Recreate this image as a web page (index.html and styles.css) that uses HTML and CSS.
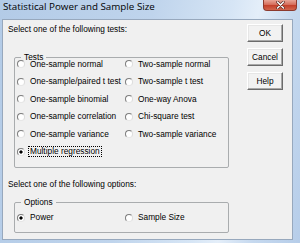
FILE: index.html
```html
<!DOCTYPE html>
<html>
<head>
<meta charset="utf-8">
<link rel="stylesheet" href="styles.css">
</head>
<body>
<div class="window">
  <div class="titlebar">
    <span class="title">Statistical Power and Sample Size</span>
    <span class="close">
      <svg width="9" height="8" viewBox="0 0 9 8">
        <path d="M1.5 1 L7.5 7 M7.5 1 L1.5 7" stroke="#5a2a24" stroke-width="2.6" stroke-linecap="round"/>
        <path d="M1.5 1 L7.5 7 M7.5 1 L1.5 7" stroke="#ffffff" stroke-width="1.4" stroke-linecap="round"/>
      </svg>
    </span>
  </div>
  <div class="client">
    <div class="main">
      <p class="prompt">Select one of the following tests:</p>
      <fieldset class="group tests">
        <legend>Tests</legend>
        <div class="grid">
          <label class="radio"><span class="dot"></span><span class="lbl">One-sample normal</span></label>
          <label class="radio"><span class="dot"></span><span class="lbl">Two-sample normal</span></label>
          <label class="radio"><span class="dot"></span><span class="lbl">One-sample/paired t test</span></label>
          <label class="radio"><span class="dot"></span><span class="lbl">Two-sample t test</span></label>
          <label class="radio"><span class="dot"></span><span class="lbl">One-sample binomial</span></label>
          <label class="radio"><span class="dot"></span><span class="lbl">One-way Anova</span></label>
          <label class="radio"><span class="dot"></span><span class="lbl">One-sample correlation</span></label>
          <label class="radio"><span class="dot"></span><span class="lbl">Chi-square test</span></label>
          <label class="radio"><span class="dot"></span><span class="lbl">One-sample variance</span></label>
          <label class="radio"><span class="dot"></span><span class="lbl">Two-sample variance</span></label>
          <label class="radio"><span class="dot checked"></span><span class="lbl focus">Multiple regression</span></label>
        </div>
      </fieldset>
      <p class="prompt prompt-options">Select one of the following options:</p>
      <fieldset class="group options">
        <legend>Options</legend>
        <div class="grid">
          <label class="radio"><span class="dot checked"></span><span class="lbl">Power</span></label>
          <label class="radio"><span class="dot"></span><span class="lbl">Sample Size</span></label>
        </div>
      </fieldset>
    </div>
    <div class="buttons">
      <button class="btn">OK</button>
      <button class="btn">Cancel</button>
      <button class="btn">Help</button>
    </div>
  </div>
</div>
</body>
</html>
```

FILE: styles.css
```css
html, body {
  margin: 0;
  padding: 0;
}
body {
  width: 300px;
  height: 243px;
  overflow: hidden;
  font-family: "Liberation Sans", Arial, sans-serif;
  font-size: 8.3px;
  color: #000;
}
.window {
  width: 300px;
  height: 243px;
  display: flex;
  flex-direction: column;
  background: linear-gradient(100deg, #b3cbe7 0%, #bfd4ec 45%, #d6e5f5 68%, #e4eef9 76%, #c6d9ef 86%, #b6cde9 100%);
}
.titlebar {
  height: 19px;
  display: flex;
  justify-content: space-between;
  align-items: flex-start;
}
.title {
  font-family: "Open Sans", "Liberation Sans", sans-serif;
  font-size: 9.8px;
  line-height: 14px;
  padding: 0 0 0 3px;
  color: #000;
  white-space: nowrap;
}
.close {
  width: 34px;
  height: 11px;
  margin-right: 3px;
  box-sizing: border-box;
  border: 1px solid #8c3a2e;
  border-top: none;
  border-radius: 0 0 4px 4px;
  background: linear-gradient(#e8a597 0%, #d66f5d 45%, #c4412c 55%, #d2664e 100%);
  display: flex;
  align-items: center;
  justify-content: center;
}
.close svg {
  display: block;
}
.client {
  margin: 0 7px 3px 2px;
  height: 221px;
  box-sizing: border-box;
  border: 1px solid #97a8bd;
  background: #f0f0f0;
  display: flex;
}
.main {
  width: 226px;
  box-sizing: border-box;
  padding: 4px 0 0 5px;
}
.prompt {
  margin: 0;
  line-height: 11px;
  white-space: nowrap;
}
.prompt-options {
  margin-top: 11.5px;
}
.group {
  width: 215px;
  box-sizing: border-box;
  margin: 0 0 0 6px;
  border: 1px solid #a9acae;
  border-radius: 2px;
  padding: 0 0 0 2px;
  min-inline-size: 0;
}
.group legend {
  line-height: 7px;
  padding: 0 3px;
  margin-left: 4px;
}
.tests {
  margin-top: 18.5px;
  padding-top: 0;
  padding-bottom: 11.5px;
}
.options {
  margin-top: 9px;
  padding-top: 8px;
  padding-bottom: 10.5px;
}
.grid {
  display: grid;
  grid-template-columns: 108px 1fr;
  grid-auto-rows: 7px;
  row-gap: 10.6px;
}
.radio {
  display: flex;
  align-items: center;
  white-space: nowrap;
}
.dot {
  width: 8px;
  height: 8px;
  box-sizing: border-box;
  border-radius: 50%;
  border: 1px solid;
  border-color: #7d7d7d #dcdcdc #e6e6e6 #7d7d7d;
  background: #fff;
  margin-right: 3px;
  flex: none;
}
.dot.checked {
  background: radial-gradient(circle, #000 0, #000 1.3px, #fff 1.9px);
}
.lbl {
  line-height: 7px;
  padding: 1px 1px;
  border: 1px solid transparent;
}
.lbl.focus {
  border: 1px dotted #000;
}
.buttons {
  display: flex;
  flex-direction: column;
  gap: 6px;
  padding-top: 4px;
  margin-left: 18px;
}
.btn {
  width: 36px;
  height: 18px;
  box-sizing: border-box;
  padding: 0;
  margin: 0;
  font-family: "Liberation Sans", Arial, sans-serif;
  font-size: 8.3px;
  color: #000;
  background: #f2f2f2;
  border: 1px solid;
  border-color: #ffffff #6b6b6b #6b6b6b #ffffff;
  box-shadow: inset -1px -1px 0 #a8a8a8, inset 1px 1px 0 #e6e6e6;
}
```
